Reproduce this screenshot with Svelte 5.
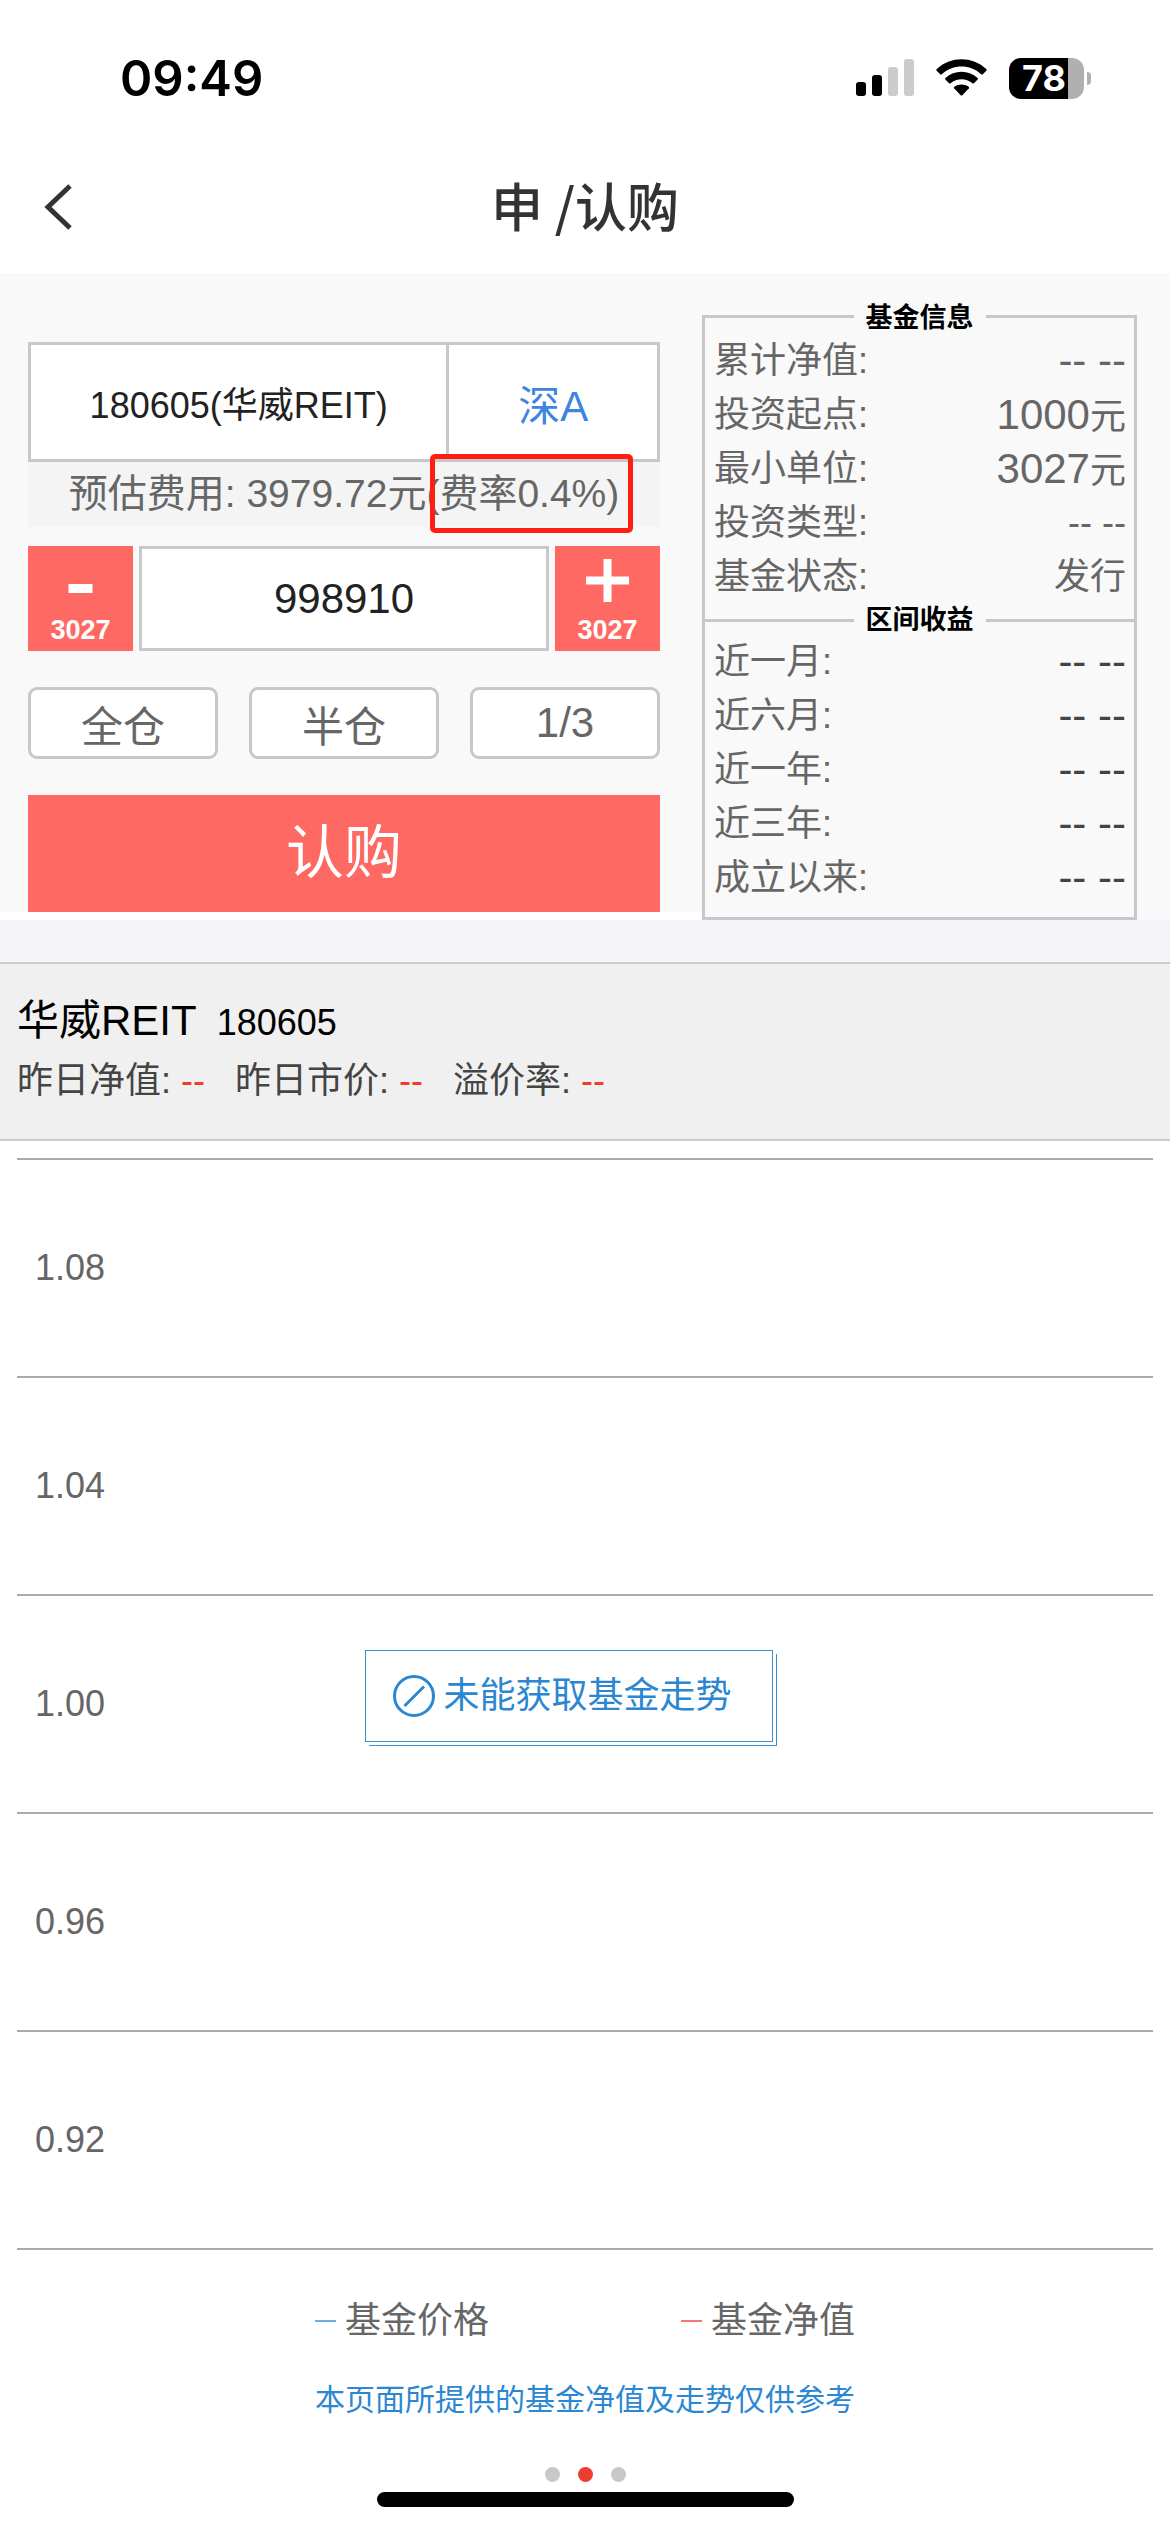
<script lang="ts">
  const step = 3027;
  const cash = 998910;

  let code = "180605(华威REIT)";
  let amount = cash;

  const fundInfo = [
    { label: "累计净值", value: "-- --", size: "large" },
    { label: "投资起点", value: "1000", unit: "元", size: "large" },
    { label: "最小单位", value: "3027", unit: "元", size: "large" },
    { label: "投资类型", value: "-- --", size: "" },
    { label: "基金状态", value: "发行", size: "" },
  ];

  const returns = [
    { label: "近一月", value: "-- --" },
    { label: "近六月", value: "-- --" },
    { label: "近一年", value: "-- --" },
    { label: "近三年", value: "-- --" },
    { label: "成立以来", value: "-- --" },
  ];

  const quotes = [
    { label: "昨日净值", value: "--" },
    { label: "昨日市价", value: "--" },
    { label: "溢价率", value: "--" },
  ];

  const ticks = ["1.08", "1.04", "1.00", "0.96", "0.92"];

  function decrease() {
    amount = Math.max(0, amount - step);
  }

  function increase() {
    amount = amount + step;
  }

  function usePart(part: number) {
    amount = Math.floor(cash / part);
  }
</script>

<div class="page">
  <div class="status-bar">
    <span class="time">09:49</span>
    <div class="status-icons">
      <svg width="58" height="38" viewBox="0 0 58 38" aria-hidden="true">
        <rect x="0" y="23" width="10" height="14" rx="3" />
        <rect x="16" y="16" width="10" height="21" rx="3" />
        <rect x="32" y="8" width="10" height="29" rx="3" fill="#ccc" />
        <rect x="48" y="0" width="10" height="37" rx="3" fill="#ccc" />
      </svg>
      <svg width="51" height="38" viewBox="0 0 51 38" aria-hidden="true">
        <path d="M0.500 11.500 Q0 10.800 0.700 10.100 C14 -3.200 37 -3.200 50.300 10.100 Q51 10.800 50.500 11.500 L46.800 15.300 Q46 16 45.200 15.300 C34 5 17 5 5.800 15.300 Q5 16 4.200 15.300 Z" />
        <path d="M9.300 20.400 Q8.700 19.700 9.400 19 C18.500 10.800 32.500 10.800 41.600 19 Q42.300 19.700 41.700 20.400 L37.900 24.200 Q37.200 24.800 36.400 24.200 C30 18.800 21 18.800 14.600 24.200 Q13.800 24.800 13.100 24.200 Z" />
        <path d="M18.100 29.200 Q17.500 28.500 18.300 27.800 C22.600 24.800 28.400 24.800 32.700 27.800 Q33.500 28.500 32.900 29.200 L26.300 36.200 Q25.500 37 24.700 36.200 Z" />
      </svg>
      <div class="battery">
        <span class="battery-level">78</span>
      </div>
    </div>
  </div>

  <header class="nav">
    <button class="back" aria-label="返回">
      <svg width="28" height="46" viewBox="0 0 28 46" aria-hidden="true">
        <path d="M26 2 L4 23 L26 44" fill="none" stroke="#333" stroke-width="5" />
      </svg>
    </button>
    <h1>申 /认购</h1>
  </header>

  <main>
    <section class="trade">
      <form class="order" on:submit|preventDefault>
        <div class="code-row">
          <input class="code" type="text" bind:value={code} aria-label="基金代码" />
          <button class="market" type="button">深A</button>
        </div>
        <p class="fee">
          预估费用: 3979.72元(<span class="rate">费率0.4%)</span>
        </p>
        <div class="amount-row">
          <button class="step" type="button" aria-label="减少" on:click={decrease}>
            <svg width="43" height="43" viewBox="0 0 43 43" aria-hidden="true">
              <rect x="9.500" y="25" width="24" height="9" fill="#fff" />
            </svg>
            <span>{step}</span>
          </button>
          <input class="amount" type="text" bind:value={amount} aria-label="金额" />
          <button class="step" type="button" aria-label="增加" on:click={increase}>
            <svg width="43" height="43" viewBox="0 0 43 43" aria-hidden="true">
              <path d="M17.500 0 H25.500 V17.500 H43 V25.500 H25.500 V43 H17.500 V25.500 H0 V17.500 H17.500 Z" fill="#fff" />
            </svg>
            <span>{step}</span>
          </button>
        </div>
        <div class="parts">
          <button type="button" on:click={() => usePart(1)}>全仓</button>
          <button type="button" on:click={() => usePart(2)}>半仓</button>
          <button type="button" on:click={() => usePart(3)}>1/3</button>
        </div>
        <button class="submit" type="submit">认购</button>
      </form>

      <div class="info">
        <fieldset>
          <legend>基金信息</legend>
          <dl>
            {#each fundInfo as item}
              <div class="info-row">
                <dt>{item.label}:</dt>
                <dd><span class={item.size}>{item.value}</span>{item.unit ?? ""}</dd>
              </div>
            {/each}
          </dl>
          <h2>区间收益</h2>
          <dl class="returns">
            {#each returns as item}
              <div class="info-row">
                <dt>{item.label}:</dt>
                <dd><span class="large">{item.value}</span></dd>
              </div>
            {/each}
          </dl>
        </fieldset>
      </div>
    </section>

    <section class="summary">
      <div class="fund">
        <h2>华威REIT</h2>
        <span>180605</span>
      </div>
      <div class="quotes">
        {#each quotes as quote}
          <span>{quote.label}: <b>{quote.value}</b></span>
        {/each}
      </div>
    </section>

    <section class="chart">
      {#each ticks as tick}
        <div class="tick">{tick}</div>
      {/each}
      <div class="overlay">
        <div class="notice">
          <svg width="42" height="42" viewBox="0 0 42 42" aria-hidden="true">
            <g fill="none" stroke="#2b87d1" stroke-width="3">
              <circle cx="21" cy="21" r="19.500" />
              <path d="M11.500 31 L31 11.500" />
            </g>
          </svg>
          <span>未能获取基金走势</span>
        </div>
      </div>
    </section>

    <section class="notes">
      <div class="legend">
        <span class="legend-item price">基金价格</span>
        <span class="legend-item value">基金净值</span>
      </div>
      <p>本页面所提供的基金净值及走势仅供参考</p>
    </section>
  </main>

  <footer>
    <div class="dots">
      <i></i>
      <i class="active"></i>
      <i></i>
    </div>
    <div class="home-bar"></div>
  </footer>
</div>

<style>
  :global(body) {
    background: #fff;
  }

  .page,
  .page * {
    box-sizing: border-box;
  }

  .page {
    font-family: "Liberation Sans", "Noto Sans CJK SC", sans-serif;
    font-size: 36px;
    color: #666;
  }

  h1,
  h2,
  p,
  dl,
  dd {
    margin: 0;
  }

  button,
  input {
    margin: 0;
    padding: 0;
    border: 0;
    border-radius: 0;
    font-family: inherit;
    background: none;
  }

  button {
    cursor: pointer;
  }

  /* Barra de estado */
  .status-bar {
    display: flex;
    align-items: center;
    justify-content: space-between;
    height: 140px;
    padding: 16px 86px 0 120px;
    color: #000;
  }

  .time {
    font-family: Inter, sans-serif;
    font-size: 49px;
    font-weight: 600;
  }

  .status-icons {
    display: flex;
    align-items: center;
    gap: 22px;
  }

  .battery {
    position: relative;
    width: 75px;
    height: 41px;
    padding-left: 13px;
    border-radius: 12px;
    background: linear-gradient(to right, #000 59px, #b0b0b0 59px);
  }

  .battery::after {
    content: "";
    position: absolute;
    top: 14px;
    right: -7px;
    width: 4px;
    height: 13px;
    border-radius: 0 4px 4px 0;
    background: #b0b0b0;
  }

  .battery-level {
    display: block;
    font-family: Inter, sans-serif;
    font-size: 36px;
    font-weight: 700;
    line-height: 41px;
    color: #fff;
  }

  .nav {
    display: grid;
    grid-template-columns: 1fr auto 1fr;
    align-items: center;
    height: 133px;
    padding: 0 44px;
  }

  .back {
    display: flex;
    justify-self: start;
  }

  .nav h1 {
    padding-bottom: 4px;
    font-family: "Noto Sans CJK SC", sans-serif;
    font-size: 52px;
    font-weight: 500;
    line-height: 72px;
    color: #333;
  }

  /* Formulario */
  .trade {
    display: grid;
    grid-template-columns: minmax(0, 702fr) minmax(0, 468fr);
    align-items: start;
  }

  .order {
    padding: 69px 42px 0 28px;
    background: #f9f9f9;
  }

  .code-row {
    display: flex;
    height: 120px;
    border: 3px solid #c8c8c8;
    background: #fff;
  }

  .code {
    flex: 2;
    min-width: 0;
    font-size: 36px;
    text-align: center;
    color: #222;
  }

  .market {
    flex: 1;
    border-left: 3px solid #c8c8c8;
    font-size: 42px;
    color: #3d84e3;
  }

  .fee {
    height: 65px;
    font-size: 39px;
    line-height: 63px;
    text-align: center;
    white-space: nowrap;
    background: #f4f4f4;
  }

  .rate {
    position: relative;
  }

  .rate::after {
    content: "";
    position: absolute;
    inset: -18px -14px -18px -9px;
    border: 5px solid #ff1f12;
    border-radius: 5px;
  }

  .amount-row {
    display: flex;
    gap: 6px;
    height: 105px;
    margin-top: 19px;
  }

  .step {
    display: flex;
    flex-direction: column;
    align-items: center;
    gap: 13px;
    width: 105px;
    padding-top: 13px;
    font-size: 27px;
    font-weight: bold;
    line-height: 30px;
    color: #fff;
    background: #ff6963;
  }

  .amount {
    flex: 1;
    min-width: 0;
    border: 3px solid #c8c8c8;
    font-size: 42px;
    text-align: center;
    color: #222;
    background: #fff;
  }

  .parts {
    display: grid;
    grid-template-columns: repeat(3, 1fr);
    gap: 31px;
    margin: 36px 0;
  }

  .parts button {
    height: 72px;
    border: 3px solid #c8c8c8;
    border-radius: 9px;
    font-size: 42px;
    color: #666;
    background: #fff;
  }

  .submit {
    display: block;
    width: 100%;
    height: 117px;
    padding-bottom: 12px;
    font-size: 58px;
    color: #fff;
    background: #ff6963;
  }

  /* Informacion del fondo */
  .info {
    padding: 27px 33px 0 0;
    background: #f9f9f9;
  }

  fieldset {
    min-width: 0;
    margin: 0;
    padding: 1px 0 12px;
    border: 3px solid #c8c8c8;
  }

  legend,
  .info h2 {
    font-size: 27px;
    font-weight: bold;
    line-height: 30px;
    color: #000;
  }

  legend {
    margin: 0 auto;
    padding: 3px 12px 0;
  }

  .info h2 {
    display: flex;
    align-items: center;
    gap: 12px;
    margin-top: 1px;
  }

  .info h2::before,
  .info h2::after {
    content: "";
    flex: 1;
    height: 3px;
    background: #c8c8c8;
  }

  .info-row {
    display: flex;
    justify-content: space-between;
    height: 54px;
    padding: 0 8px 0 9px;
    line-height: 54px;
    white-space: nowrap;
  }

  .large {
    font-size: 42px;
  }

  .returns dd {
    color: #444;
  }

  /* Resumen */
  .summary {
    height: 221px;
    padding: 31px 17px 0;
    border-top: 42px solid #f4f4f9;
    border-bottom: 2px solid #ccc;
    color: #444;
    background: #f0f0f0;
    box-shadow: inset 0 2px #ccc;
  }

  .fund {
    display: flex;
    align-items: baseline;
    gap: 20px;
    line-height: 56px;
    color: #000;
  }

  .fund h2 {
    font-size: 42px;
    font-weight: normal;
  }

  .quotes {
    display: flex;
    gap: 30px;
    line-height: 60px;
  }

  .quotes b {
    font-weight: normal;
    color: #f03c30;
  }

  /* Grafico */
  .chart {
    position: relative;
    margin: 17px 17px 0;
    border-bottom: 2px solid #aaa;
  }

  .tick {
    display: flex;
    align-items: center;
    height: 218px;
    padding-left: 18px;
    border-top: 2px solid #aaa;
  }

  .overlay {
    position: absolute;
    inset: 0 32px 14px 0;
    display: flex;
    align-items: center;
    justify-content: center;
  }

  .notice {
    display: flex;
    align-items: center;
    gap: 8px;
    height: 92px;
    padding: 0 40px 0 27px;
    border: 1px solid #3d8fc8;
    line-height: 42px;
    color: #2b87d1;
    background: #fff;
    box-shadow:
      3px 3px #fff,
      4px 4px #3d8fc8;
  }

  .notes {
    width: 540px;
    margin: 0 auto;
    padding-top: 44px;
  }

  .legend {
    display: flex;
    justify-content: space-between;
    line-height: 54px;
  }

  .legend-item {
    display: flex;
    align-items: center;
    gap: 9px;
  }

  .legend-item::before {
    content: "";
    width: 21px;
    height: 2px;
    background: #6ab0e4;
  }

  .legend-item.value::before {
    background: #f07878;
  }

  .notes p {
    margin-top: 30px;
    font-size: 30px;
    line-height: 44px;
    white-space: nowrap;
    color: #2b87d1;
  }

  footer {
    padding: 45px 0 24px;
  }

  .dots {
    display: flex;
    justify-content: center;
    gap: 18px;
  }

  .dots i {
    width: 15px;
    height: 15px;
    border-radius: 50%;
    background: #c8c8c8;
  }

  .dots .active {
    background: #f03c30;
  }

  .home-bar {
    width: 417px;
    height: 15px;
    margin: 10px auto 0;
    border-radius: 8px;
    background: #000;
  }
</style>
